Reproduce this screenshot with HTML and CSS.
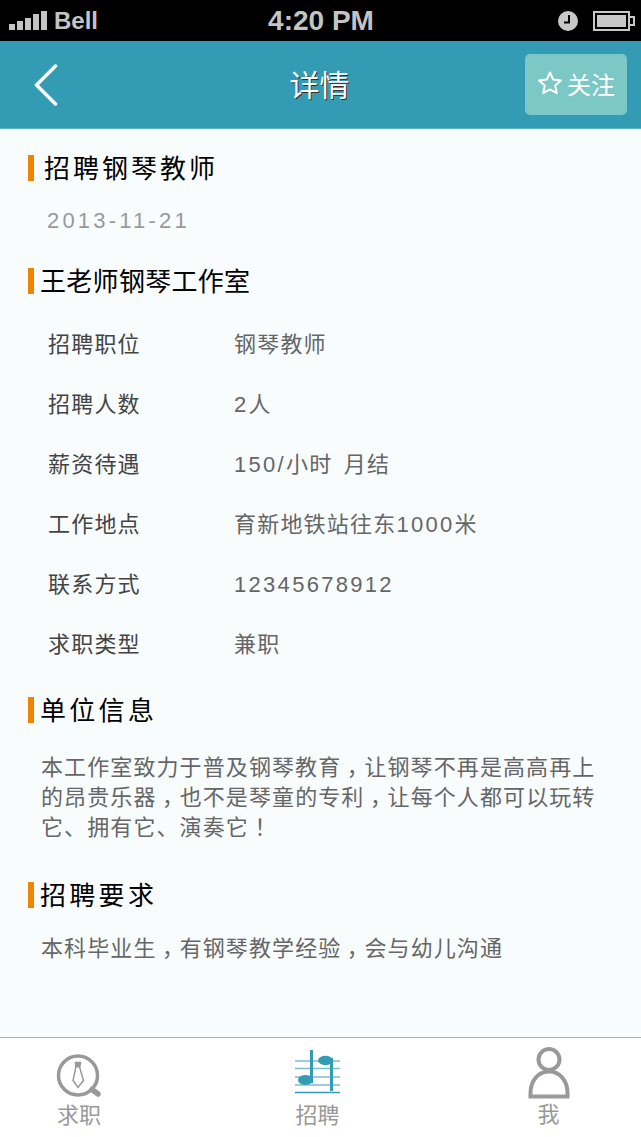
FILE: index.html
```html
<!DOCTYPE html>
<html lang="zh">
  <head>
    <meta charset="utf-8">
    <title>详情</title>
    <link rel="stylesheet" href="styles.css">
  </head>
  <body>
    <div class="status_bar">
      <div class="status_left">
        <svg class="signal" width="38" height="21" viewBox="0 0 38 21">
          <rect x="0" y="14" width="6" height="6" fill="#c4c4c4"/>
          <rect x="8" y="11" width="6" height="9" fill="#c4c4c4"/>
          <rect x="16" y="8" width="6" height="12" fill="#c4c4c4"/>
          <rect x="24" y="4" width="6" height="16" fill="#c4c4c4"/>
          <rect x="32" y="1" width="6" height="19" fill="#c4c4c4"/>
        </svg>
        <span class="carrier">Bell</span>
      </div>
      <span class="clock">4:20 PM</span>
      <div class="status_right">
        <svg width="20" height="20" viewBox="0 0 20 20">
          <circle cx="10" cy="10" r="10" fill="#c8c8c8"/>
          <path d="M11 4v7.500H6" fill="none" stroke="#000" stroke-width="2"/>
        </svg>
        <svg width="42" height="20" viewBox="0 0 42 20">
          <rect x="1" y="1" width="35" height="18" fill="none" stroke="#c8c8c8" stroke-width="2"/>
          <rect x="4" y="4" width="29" height="12" fill="#c8c8c8"/>
          <path d="M37 6h4v8h-4" fill="none" stroke="#c8c8c8" stroke-width="2"/>
        </svg>
      </div>
    </div>

    <div class="top_bar">
      <svg class="back" width="24" height="42" viewBox="0 0 24 42">
        <path d="M21.500 2 L2.500 21 L21.500 40" fill="none" stroke="#fff" stroke-width="3.500" stroke-linecap="round" stroke-linejoin="round"/>
      </svg>
      <h1 class="page_title">详情</h1>
      <div class="follow">
        <svg width="26" height="26" viewBox="0 0 26 26">
          <path d="M13 2.500 L16.200 9.600 L24 10.400 L18.200 15.600 L19.800 23.200 L13 19.300 L6.200 23.200 L7.800 15.600 L2 10.400 L9.800 9.600 Z" fill="none" stroke="#fff" stroke-width="2" stroke-linejoin="round"/>
        </svg>
        <span>关注</span>
      </div>
    </div>

    <div class="content">
      <h2 class="head head_job">招聘钢琴教师</h2>
      <div class="date">2013-11-21</div>

      <h2 class="head head_studio">王老师钢琴工作室</h2>
      <div class="info">
        <div class="row"><span class="key">招聘职位</span><span class="val">钢琴教师</span></div>
        <div class="row"><span class="key">招聘人数</span><span class="val"><span class="num">2</span>人</span></div>
        <div class="row"><span class="key">薪资待遇</span><span class="val"><span class="num">150/</span>小时 月结</span></div>
        <div class="row"><span class="key">工作地点</span><span class="val">育新地铁站往东<span class="num">1000</span>米</span></div>
        <div class="row"><span class="key">联系方式</span><span class="val"><span class="num">12345678912</span></span></div>
        <div class="row"><span class="key">求职类型</span><span class="val">兼职</span></div>
      </div>

      <h2 class="head head_company">单位信息</h2>
      <div class="para para_company">
        <div>本工作室致力于普及钢琴教育<span class="mark">，</span>让钢琴不再是高高再上</div>
        <div>的昂贵乐器<span class="mark">，</span>也不是琴童的专利<span class="mark">，</span>让每个人都可以玩转</div>
        <div>它、拥有它、演奏它<span class="mark">！</span></div>
      </div>

      <h2 class="head head_req">招聘要求</h2>
      <div class="para para_req">
        <div>本科毕业生<span class="mark">，</span>有钢琴教学经验<span class="mark">，</span>会与幼儿沟通</div>
      </div>
    </div>

    <div class="tabs">
      <div class="tab tab_a">
        <svg width="48" height="44" viewBox="0 0 48 44">
          <circle cx="23" cy="21.500" r="19.500" fill="none" stroke="#999" stroke-width="3.500"/>
          <path d="M37 35.500 L43 40" stroke="#999" stroke-width="5.500" stroke-linecap="round"/>
          <path d="M20.500 8.500h5l-.8 5 3.800 13-5.500 7-5-7 2.800-13z" fill="none" stroke="#999" stroke-width="1.500"/>
          <path d="M20.500 8.500h5l-.8 5h-3.400z" fill="#999"/>
        </svg>
        <span>求职</span>
      </div>
      <div class="tab tab_b">
        <svg width="46" height="44" viewBox="0 0 46 44">
          <path d="M0 11H45M0 18.500H45M0 27H45M0 35H45" stroke="#7dbdcc" stroke-width="1.500"/>
          <path d="M0 42.500H45" stroke="#339cb4" stroke-width="1.500"/>
          <rect x="15" y="0" width="3" height="33" fill="#339cb4"/>
          <ellipse cx="10.500" cy="30" rx="7.500" ry="5" fill="#339cb4"/>
          <rect x="35" y="8" width="3" height="33" fill="#339cb4"/>
          <ellipse cx="30.500" cy="10.500" rx="7.500" ry="4.700" fill="#339cb4"/>
        </svg>
        <span>招聘</span>
      </div>
      <div class="tab tab_c">
        <svg width="42" height="52" viewBox="0 0 42 52">
          <circle cx="21" cy="12.500" r="10.500" fill="none" stroke="#999" stroke-width="4"/>
          <path d="M2.500 49.500 V46 C2.500 34 10 24.500 21 24.500 C32 24.500 39.500 34 39.500 46 V49.500 Z" fill="none" stroke="#999" stroke-width="4"/>
        </svg>
        <span>我</span>
      </div>
    </div>
  </body>
</html>
```

FILE: styles.css
```css
html, body {
  margin: 0;
  padding: 0;
}
body {
  display: flex;
  flex-direction: column;
  width: 641px;
  height: 1137px;
  overflow: hidden;
  background-color: #f8fcfd;
  font-family: "Liberation Sans", "Noto Sans CJK SC", sans-serif;
}

/* status bar */
.status_bar {
  display: flex;
  align-items: center;
  justify-content: space-between;
  flex: 0 0 41px;
  box-sizing: border-box;
  padding: 0 6px 0 9px;
  background-color: #000;
  color: #c4c4c4;
  font-weight: bold;
}
.status_left {
  display: flex;
  align-items: center;
  gap: 7px;
  width: 188px;
}
.carrier {
  font-size: 24px;
}
.clock {
  font-size: 28px;
}
.status_right {
  display: flex;
  align-items: center;
  justify-content: flex-end;
  gap: 15px;
  width: 190px;
}

/* header */
.top_bar {
  display: grid;
  grid-template-columns: 1fr auto 1fr;
  align-items: center;
  flex: 0 0 88px;
  box-sizing: border-box;
  padding: 0 14px 0 34px;
  background-color: #339cb4;
  border-bottom: 1px solid #5cb5c9;
}
.page_title {
  margin: 3px 22px 0 0;
  color: #fff;
  font-size: 30px;
  line-height: 36px;
  font-weight: normal;
  text-shadow: 1px 1px 0 #3a2a20;
}
.follow {
  display: flex;
  align-items: center;
  gap: 4px;
  justify-self: end;
  box-sizing: border-box;
  width: 102px;
  height: 61px;
  padding: 0 0 3px 12px;
  border-radius: 5px;
  background-color: #7bc8c6;
  color: #fff;
  font-size: 24px;
}

/* content */
.content {
  flex: 1 1 auto;
  padding: 0 28px;
}
.head {
  margin: 0;
  height: 26px;
  border-left: 6px solid #f08400;
  padding-left: 6px;
  color: #000;
  font-size: 26px;
  line-height: 28px;
  letter-spacing: 3.300px;
  font-weight: normal;
}
.head_job {
  margin-top: 26px;
  padding-left: 10px;
  letter-spacing: 3px;
}
.head_studio {
  margin-top: 34px;
  letter-spacing: 0.300px;
}
.head_company {
  margin-top: 22px;
}
.head_req {
  margin-top: 39px;
}
.date {
  margin: 27px 0 0 19px;
  height: 26px;
  color: #999;
  font-size: 22px;
  line-height: 26px;
  letter-spacing: 3.200px;
}
.info {
  margin-top: 21px;
}
.row {
  display: flex;
  align-items: center;
  height: 60px;
  padding-left: 20px;
  font-size: 22px;
  line-height: 26px;
  letter-spacing: 1.200px;
}
.key {
  flex: 0 0 186px;
  color: #444;
}
.val {
  color: #666;
  letter-spacing: 1.200px;
  word-spacing: 4px;
}
.num {
  letter-spacing: 2.300px;
}
.para {
  margin: 0 0 0 13px;
  color: #666;
  font-size: 22px;
  line-height: 30px;
  letter-spacing: 1.100px;
}
.para_company {
  margin-top: 30px;
}
.para_req {
  margin-top: 26px;
}
/* full-width marks sit in the middle of their cell here */
.mark {
  padding: 0 5.500px;
  font-feature-settings: "halt";
}

/* bottom tabs */
.tabs {
  display: flex;
  flex: 0 0 100px;
  box-sizing: border-box;
  border-top: 1px solid #aab4b4;
  background-color: #fff;
  color: #999;
  font-size: 22px;
}
.tab {
  display: flex;
  flex-direction: column;
  align-items: center;
}
.tab span {
  line-height: 26px;
}
.tab_a {
  width: 158px;
  padding-top: 16px;
}
.tab_a span {
  margin-top: 5px;
}
.tab_b {
  width: 319px;
  padding-top: 12px;
}
.tab_b span {
  margin-top: 9px;
}
.tab_c {
  width: 143px;
  padding-top: 9px;
}
.tab_c span {
  margin-top: 3px;
}
```
